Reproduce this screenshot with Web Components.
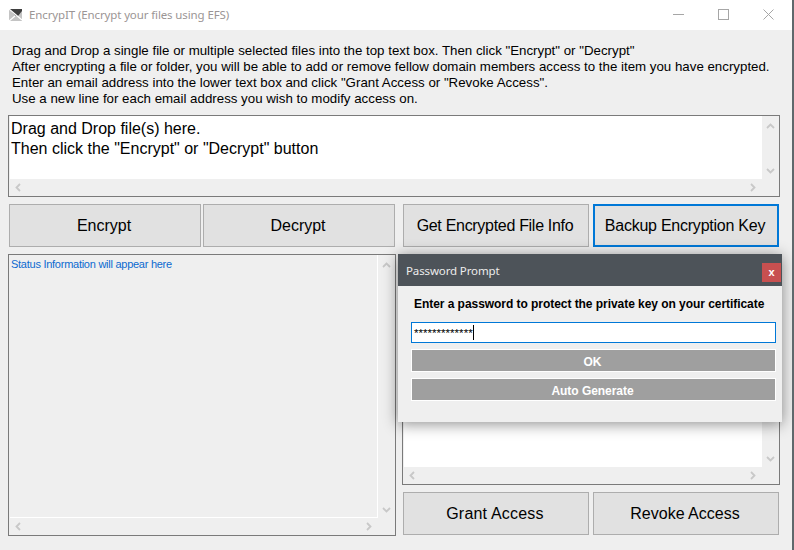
<!DOCTYPE html>
<html>
<head>
<meta charset="utf-8">
<title>EncrypIT</title>
<style>
    html, body { margin: 0; padding: 0; background: #efefef; }
</style>
</head>
<body>
<app-window>
    <title-bar slot="title">EncrypIT (Encrypt your files using EFS)</title-bar>
    <div slot="intro">Drag and Drop a single file or multiple selected files into the top text box. Then click "Encrypt" or "Decrypt"</div>
    <div slot="intro">After encrypting a file or folder, you will be able to add or remove fellow domain members access to the item you have encrypted.</div>
    <div slot="intro">Enter an email address into the lower text box and click "Grant Access or "Revoke Access".</div>
    <div slot="intro">Use a new line for each email address you wish to modify access on.</div>

    <scroll-box slot="drop" class="drop">Drag and Drop file(s) here.<br>Then click the "Encrypt" or "Decrypt" button</scroll-box>

    <win-button slot="crypt">Encrypt</win-button>
    <win-button slot="crypt">Decrypt</win-button>
    <win-button slot="tools" style="letter-spacing: -.3px">Get Encrypted File Info</win-button>
    <win-button slot="tools" style="letter-spacing: -.24px" focused>Backup Encryption Key</win-button>

    <scroll-box slot="status" flat>Status Information will appear here</scroll-box>
    <scroll-box slot="emails"></scroll-box>

    <win-button slot="access" style="letter-spacing: .2px">Grant Access</win-button>
    <win-button slot="access">Revoke Access</win-button>

    <password-prompt slot="overlay"></password-prompt>
</app-window>

<script>
const chevron = (dir) => {
    const points = {
        up: '1,6 4.5,2.5 8,6',
        down: '1,2 4.5,5.5 8,2',
        left: '6,1 2.5,4.5 6,8',
        right: '2,1 5.5,4.5 2,8'
    };
    return `<svg class="arrow ${dir}" width="9" height="9" viewBox="0 0 9 9" fill="none" stroke="#c8c8c8" stroke-width="1.8"><polyline points="${points[dir]}"></polyline></svg>`;
};

class TitleBar extends HTMLElement {
    constructor() {
        super();
        this.attachShadow({ mode: 'open' });
        this.shadowRoot.innerHTML = `
            <style>
                :host { display: flex; align-items: center; height: 30px; background: #fff; color: #9b9595; font: 11.5px "Noto Sans", "Open Sans", sans-serif; letter-spacing: -.12px; }
                .icon { margin: 0 6px 0 9px; flex: none; }
                .name { flex: 1; padding-bottom: 1px; }
                .controls { display: flex; align-items: center; gap: 34px; margin: 0 18px 2px 0; }
            </style>
            <svg class="icon" width="14" height="13" viewBox="0 0 14 13">
                <rect x="0" y="0" width="13" height="12" fill="#c4c4c4"></rect>
                <path d="M0 0 H13 V2 L9 7 H7 Z" fill="#3f3f3f"></path>
                <path d="M0 0 L13 11 M0 12 L6 7" stroke="#fff" stroke-width="1.3" fill="none"></path>
            </svg>
            <span class="name"><slot></slot></span>
            <div class="controls">
                <svg width="11" height="11" viewBox="0 0 11 11"><path d="M0 5.5 H11" stroke="#a6a6a6"></path></svg>
                <svg width="11" height="11" viewBox="0 0 11 11"><rect x=".5" y=".5" width="10" height="10" fill="none" stroke="#a6a6a6"></rect></svg>
                <svg width="11" height="11" viewBox="0 0 11 11"><path d="M.5 .5 L10.5 10.5 M10.5 .5 L.5 10.5" stroke="#a6a6a6"></path></svg>
            </div>
        `;
    }
}

class WinButton extends HTMLElement {
    constructor() {
        super();
        this.attachShadow({ mode: 'open' });
        this.shadowRoot.innerHTML = `
            <style>
                :host { display: flex; align-items: center; justify-content: center; box-sizing: border-box; height: 43px; padding-right: 2px; background: #e1e1e1; border: 1px solid #adadad; color: #000; font: 16px "Liberation Sans", Arial, sans-serif; }
                :host([focused]) { border: 2px solid #0078d7; }
            </style>
            <slot></slot>
        `;
    }
}

class ScrollBox extends HTMLElement {
    constructor() {
        super();
        this.attachShadow({ mode: 'open' });
        this.shadowRoot.innerHTML = `
            <style>
                :host { display: grid; grid-template-columns: 1fr 17px; grid-template-rows: 1fr 17px; box-sizing: border-box; border: 1px solid #7a7a7a; padding-left: 1px; background: #efefef; color: #000; font: 16px/20px "Liberation Sans", Arial, sans-serif; min-height: 0; }
                .text { background: #fff; padding: 3px 0 0 1px; overflow: hidden; }
                :host([flat]) .text { background: #efefef; border-right: 1px solid #fff; border-bottom: 1px solid #fff; color: #0c6ad0; font-size: 11px; letter-spacing: -.26px; line-height: 14px; padding: 2px 0 0 1px; }
                .vbar { display: flex; flex-direction: column; justify-content: space-between; align-items: center; padding: 6px 0 3px; }
                .hbar { display: flex; justify-content: space-between; align-items: center; padding: 0 4px; }
                .arrow { display: block; }
            </style>
            <div class="text"><slot></slot></div>
            <div class="vbar">${chevron('up')}${chevron('down')}</div>
            <div class="hbar">${chevron('left')}${chevron('right')}</div>
        `;
    }
}

class PasswordPrompt extends HTMLElement {
    constructor() {
        super();
        this.attachShadow({ mode: 'open' });
        this.shadowRoot.innerHTML = `
            <style>
                :host { display: block; position: absolute; left: 398px; top: 254px; width: 384px; height: 168px; background: #efefef; box-shadow: 0 2px 14px rgba(0, 0, 0, .45); font: bold 12px "Liberation Sans", Arial, sans-serif; letter-spacing: -.05px; color: #000; }
                .head { display: flex; justify-content: space-between; height: 32px; background: #4d5359; color: #ececec; font: 11.5px "Noto Sans", "Open Sans", sans-serif; letter-spacing: -.13px; }
                .head span { padding: 9px 0 0 8px; }
                .close { width: 19px; height: 19px; margin: 9px 1px 0 0; background: #c75050; color: #fff; font: bold 11px/18px "Liberation Sans", Arial, sans-serif; text-align: center; }
                .body { display: flex; flex-direction: column; padding: 11px 6px 0 13px; }
                .label { margin-left: 3px; height: 25px; line-height: 14px; }
                .input { box-sizing: border-box; height: 21px; border: 1px solid #0078d7; background: #fff; font-weight: normal; line-height: 20px; padding-left: 2px; display: flex; font-size: 11.6px; letter-spacing: 0; }
                .caret { width: 1px; height: 15px; background: #000; margin: 2px 0 0 0; }
                .btn { box-sizing: border-box; height: 23px; margin-top: 6px; padding-right: 2px; border: 1px solid #fff; background: #9f9f9f; color: #fff; text-align: center; line-height: 25px; }
            </style>
            <div class="head"><span>Password Prompt</span><div class="close">x</div></div>
            <div class="body">
                <div class="label">Enter a password to protect the private key on your certificate</div>
                <div class="input">*************<div class="caret"></div></div>
                <div class="btn">OK</div>
                <div class="btn">Auto Generate</div>
            </div>
        `;
    }
}

class AppWindow extends HTMLElement {
    constructor() {
        super();
        this.attachShadow({ mode: 'open' });
        this.shadowRoot.innerHTML = `
            <style>
                :host { display: flex; flex-direction: column; position: relative; box-sizing: border-box; width: 794px; height: 550px; overflow: hidden; border-right: 2px solid #5f686c; background: #efefef; }
                .main { flex: 1; display: grid; grid-template-columns: 388px 378px; grid-template-rows: 85px 82px 50px 1fr; column-gap: 6px; row-gap: 0; padding: 0 0 14px 8px; min-height: 0; }
                .intro { grid-column: 1 / 3; padding: 13px 0 0 4px; font: 13.3px/16px "Liberation Sans", Arial, sans-serif; color: #000; white-space: nowrap; }
                .drop { grid-column: 1 / 3; display: grid; }
                .crypt, .tools { display: grid; grid-template-columns: 1fr 1fr; padding: 0 1px; margin-top: 7px; height: 43px; }
                .crypt { column-gap: 2px; }
                .tools { column-gap: 4px; }
                .status { display: grid; margin-top: 7px; }
                .right { display: grid; grid-template-rows: 1fr 43px; row-gap: 7px; margin: 7px 0 1px; }
                .emails { display: grid; }
                .access { display: grid; grid-template-columns: 1fr 1fr; column-gap: 4px; padding: 0 1px; }
            </style>
            <slot name="title"></slot>
            <div class="main">
                <div class="intro"><slot name="intro"></slot></div>
                <div class="drop"><slot name="drop"></slot></div>
                <div class="crypt"><slot name="crypt"></slot></div>
                <div class="tools"><slot name="tools"></slot></div>
                <div class="status"><slot name="status"></slot></div>
                <div class="right">
                    <div class="emails"><slot name="emails"></slot></div>
                    <div class="access"><slot name="access"></slot></div>
                </div>
            </div>
            <slot name="overlay"></slot>
        `;
    }
}

customElements.define('title-bar', TitleBar);
customElements.define('win-button', WinButton);
customElements.define('scroll-box', ScrollBox);
customElements.define('password-prompt', PasswordPrompt);
customElements.define('app-window', AppWindow);
</script>
</body>
</html>
